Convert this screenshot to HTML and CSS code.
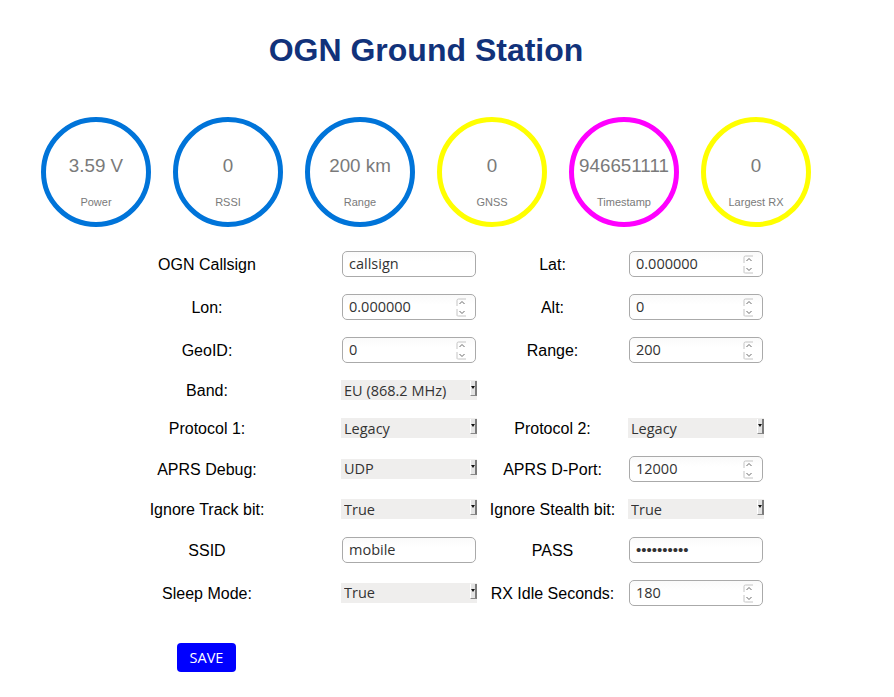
FILE: index.html
```html
<!DOCTYPE html>
<html>
<head>
<meta charset="utf-8">
<title>OGN Ground Station</title>
<link rel="stylesheet" href="styles.css">
</head>
<body>
<main class="page">
  <h1 class="title">OGN Ground Station</h1>

  <div class="gauges">
    <div class="gauge blue"><span class="val">3.59 V</span><span class="cap">Power</span></div>
    <div class="gauge blue"><span class="val">0</span><span class="cap">RSSI</span></div>
    <div class="gauge blue"><span class="val">200 km</span><span class="cap">Range</span></div>
    <div class="gauge yellow"><span class="val">0</span><span class="cap">GNSS</span></div>
    <div class="gauge magenta"><span class="val">946651111</span><span class="cap">Timestamp</span></div>
    <div class="gauge yellow"><span class="val">0</span><span class="cap">Largest RX</span></div>
  </div>

  <form class="form">
    <label class="lbl">OGN Callsign</label>
    <span class="field"><input class="inp" type="text" value="callsign"></span>
    <label class="lbl">Lat:</label>
    <span class="field"><input class="inp" type="text" value="0.000000"><svg class="spin" width="12" height="19" viewBox="0 0 12 19"><path class="box" d="M1 8V2.5Q1 1 2.5 1H10"/><path class="box" d="M1 11V17.5Q1 18 2.5 18H10"/><path class="chev" d="M3.5 6L6 3.5L8.5 6"/><path class="chev" d="M3.5 13L6 15.5L8.5 13"/></svg></span>

    <label class="lbl">Lon:</label>
    <span class="field"><input class="inp" type="text" value="0.000000"><svg class="spin" width="12" height="19" viewBox="0 0 12 19"><path class="box" d="M1 8V2.5Q1 1 2.5 1H10"/><path class="box" d="M1 11V17.5Q1 18 2.5 18H10"/><path class="chev" d="M3.5 6L6 3.5L8.5 6"/><path class="chev" d="M3.5 13L6 15.5L8.5 13"/></svg></span>
    <label class="lbl">Alt:</label>
    <span class="field"><input class="inp" type="text" value="0"><svg class="spin" width="12" height="19" viewBox="0 0 12 19"><path class="box" d="M1 8V2.5Q1 1 2.5 1H10"/><path class="box" d="M1 11V17.5Q1 18 2.5 18H10"/><path class="chev" d="M3.5 6L6 3.5L8.5 6"/><path class="chev" d="M3.5 13L6 15.5L8.5 13"/></svg></span>

    <label class="lbl">GeoID:</label>
    <span class="field"><input class="inp" type="text" value="0"><svg class="spin" width="12" height="19" viewBox="0 0 12 19"><path class="box" d="M1 8V2.5Q1 1 2.5 1H10"/><path class="box" d="M1 11V17.5Q1 18 2.5 18H10"/><path class="chev" d="M3.5 6L6 3.5L8.5 6"/><path class="chev" d="M3.5 13L6 15.5L8.5 13"/></svg></span>
    <label class="lbl">Range:</label>
    <span class="field"><input class="inp" type="text" value="200"><svg class="spin" width="12" height="19" viewBox="0 0 12 19"><path class="box" d="M1 8V2.5Q1 1 2.5 1H10"/><path class="box" d="M1 11V17.5Q1 18 2.5 18H10"/><path class="chev" d="M3.5 6L6 3.5L8.5 6"/><path class="chev" d="M3.5 13L6 15.5L8.5 13"/></svg></span>

    <label class="lbl">Band:</label>
    <span class="sel"><select><option>EU (868.2 MHz)</option></select></span>
    <span class="empty"></span>
    <span class="empty"></span>

    <label class="lbl">Protocol 1:</label>
    <span class="sel"><select><option>Legacy</option></select></span>
    <label class="lbl">Protocol 2:</label>
    <span class="sel"><select><option>Legacy</option></select></span>

    <label class="lbl">APRS Debug:</label>
    <span class="sel"><select><option>UDP</option></select></span>
    <label class="lbl">APRS D-Port:</label>
    <span class="field"><input class="inp" type="text" value="12000"><svg class="spin" width="12" height="19" viewBox="0 0 12 19"><path class="box" d="M1 8V2.5Q1 1 2.5 1H10"/><path class="box" d="M1 11V17.5Q1 18 2.5 18H10"/><path class="chev" d="M3.5 6L6 3.5L8.5 6"/><path class="chev" d="M3.5 13L6 15.5L8.5 13"/></svg></span>

    <label class="lbl">Ignore Track bit:</label>
    <span class="sel"><select><option>True</option></select></span>
    <label class="lbl">Ignore Stealth bit:</label>
    <span class="sel"><select><option>True</option></select></span>

    <label class="lbl">SSID</label>
    <span class="field"><input class="inp" type="text" value="mobile"></span>
    <label class="lbl">PASS</label>
    <span class="field"><input class="inp pass" type="password" value="0123456789"></span>

    <label class="lbl">Sleep Mode:</label>
    <span class="sel"><select><option>True</option></select></span>
    <label class="lbl">RX Idle Seconds:</label>
    <span class="field"><input class="inp" type="text" value="180"><svg class="spin" width="12" height="19" viewBox="0 0 12 19"><path class="box" d="M1 8V2.5Q1 1 2.5 1H10"/><path class="box" d="M1 11V17.5Q1 18 2.5 18H10"/><path class="chev" d="M3.5 6L6 3.5L8.5 6"/><path class="chev" d="M3.5 13L6 15.5L8.5 13"/></svg></span>
  </form>

  <button class="save" type="button">SAVE</button>
</main>
</body>
</html>
```

FILE: styles.css
```css
html, body {
  margin: 0;
  padding: 0;
  background: #ffffff;
}

body {
  margin: 8px;
  font-family: "Liberation Sans", Arial, sans-serif;
  color: #000;
}

.page {
  width: 836px;
}

.title {
  margin: 24px 0 0;
  font-size: 32px;
  line-height: 37px;
  font-weight: bold;
  color: #11327a;
  text-align: center;
}

.gauges {
  display: flex;
  gap: 22px;
  margin: 48px 0 0 33px;
}

.gauge {
  box-sizing: border-box;
  width: 110px;
  height: 110px;
  border: 5px solid #0074d9;
  border-radius: 50%;
  display: flex;
  flex-direction: column;
  align-items: center;
  padding-top: 33px;
  color: #7a7a7a;
}

.gauge.blue { border-color: #0074d9; }
.gauge.yellow { border-color: #ffff00; }
.gauge.magenta { border-color: #ff00ff; }

.gauge .val {
  font-size: 18.8px;
  line-height: 21px;
  white-space: nowrap;
}

.gauge .cap {
  margin-top: 20px;
  font-size: 11px;
  line-height: 13px;
  white-space: nowrap;
}

.form {
  display: grid;
  grid-template-columns: 268px 136px 151px 136px;
  align-items: center;
  margin: 15px 0 0 65px;
}

.lbl {
  font-size: 16px;
  line-height: 18px;
  padding-top: 2px;
  text-align: center;
  white-space: nowrap;
}

.field {
  position: relative;
  display: block;
  margin: 8.5px 1px;
  height: 26px;
}

.inp {
  box-sizing: border-box;
  display: block;
  width: 134px;
  height: 26px;
  margin: 0;
  padding: 0 6px;
  border: 1px solid #aaaaaa;
  border-radius: 5px;
  background: linear-gradient(#fafafa, #ffffff 40%);
  font-family: "Open Sans", sans-serif;
  font-size: 14.5px;
  color: #333;
  outline: none;
}

.inp.pass {
  font-family: "Liberation Sans", sans-serif;
  font-size: 15px;
  letter-spacing: 0;
}

.spin {
  position: absolute;
  right: 8px;
  top: 4px;
  display: block;
}

.spin .box {
  fill: none;
  stroke: #c4c4c4;
  stroke-width: 1;
}

.spin .chev {
  fill: none;
  stroke: #6a6a6a;
  stroke-width: 1;
}

.sel {
  position: relative;
  display: block;
  width: 136px;
  height: 20px;
  margin: 9px 0;
  background: #efeeed;
}

.sel select {
  -webkit-appearance: none;
  appearance: none;
  display: block;
  width: 100%;
  height: 20px;
  margin: 0;
  padding: 0 0 0 3px;
  border: none;
  background: transparent;
  font-family: "Open Sans", sans-serif;
  font-size: 14.5px;
  color: #333;
  outline: none;
}

.sel::after {
  content: "";
  position: absolute;
  right: 0;
  top: 1px;
  width: 4px;
  height: 14px;
  background: #e4e4e4;
  border-left: 1px solid #ffffff;
  border-right: 2px solid #7c7c7c;
  border-bottom: 1px solid #8a8a8a;
  pointer-events: none;
}

.sel::before {
  content: "";
  position: absolute;
  right: 2px;
  top: 6px;
  width: 0;
  height: 0;
  border-left: 2.5px solid transparent;
  border-right: 2.5px solid transparent;
  border-top: 3px solid #111;
  z-index: 1;
  pointer-events: none;
}

.save {
  display: block;
  margin: 29px 0 0 169px;
  width: 59px;
  height: 29px;
  padding: 0;
  border: none;
  border-radius: 4px;
  background: #0000ff;
  color: #ffffff;
  font-family: "Open Sans", sans-serif;
  font-size: 14.5px;
}
```
